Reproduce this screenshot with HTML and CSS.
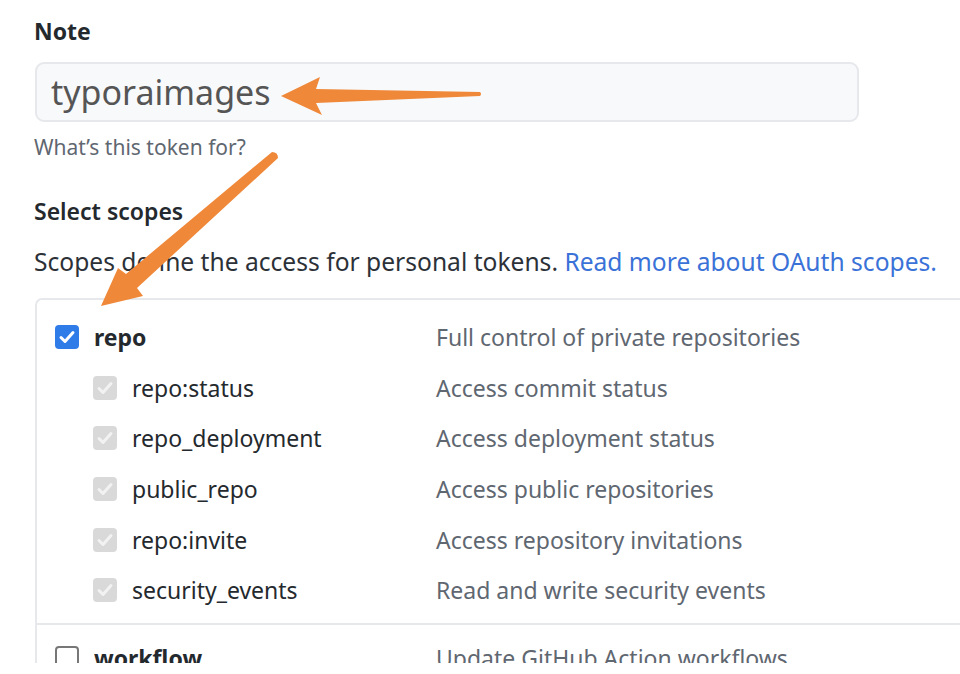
FILE: index.html
```html
<!DOCTYPE html>
<html lang="en">
<head>
<meta charset="utf-8">
<title>Note</title>
<link rel="stylesheet" href="styles.css">
</head>
<body>
<div class="page">
  <div class="field">
    <div class="label">Note</div>
    <div class="input">typoraimages</div>
    <div class="hint">What’s this token for?</div>
  </div>
  <div class="scopes">
    <div class="heading">Select scopes</div>
    <p class="desc">Scopes define the access for personal tokens. <a class="link">Read more about OAuth scopes.</a></p>
    <div class="table">
      <div class="group">
        <div class="row main">
          <span class="cell name"><span class="cb on"><svg viewBox="0 0 24 24"><path d="M6 12.5l4 4 8-9" /></svg></span><b>repo</b></span>
          <span class="cell text">Full control of private repositories</span>
        </div>
        <div class="row sub">
          <span class="cell name"><span class="cb dis"><svg viewBox="0 0 24 24"><path d="M6 12.5l4 4 8-9" /></svg></span>repo:status</span>
          <span class="cell text">Access commit status</span>
        </div>
        <div class="row sub">
          <span class="cell name"><span class="cb dis"><svg viewBox="0 0 24 24"><path d="M6 12.5l4 4 8-9" /></svg></span>repo_deployment</span>
          <span class="cell text">Access deployment status</span>
        </div>
        <div class="row sub">
          <span class="cell name"><span class="cb dis"><svg viewBox="0 0 24 24"><path d="M6 12.5l4 4 8-9" /></svg></span>public_repo</span>
          <span class="cell text">Access public repositories</span>
        </div>
        <div class="row sub">
          <span class="cell name"><span class="cb dis"><svg viewBox="0 0 24 24"><path d="M6 12.5l4 4 8-9" /></svg></span>repo:invite</span>
          <span class="cell text">Access repository invitations</span>
        </div>
        <div class="row sub">
          <span class="cell name"><span class="cb dis"><svg viewBox="0 0 24 24"><path d="M6 12.5l4 4 8-9" /></svg></span>security_events</span>
          <span class="cell text">Read and write security events</span>
        </div>
      </div>
      <div class="group">
        <div class="row main">
          <span class="cell name"><span class="cb off"></span><b>workflow</b></span>
          <span class="cell text">Update GitHub Action workflows</span>
        </div>
      </div>
    </div>
  </div>
  <svg class="arrows" width="960" height="674" viewBox="0 0 960 674">
    <path class="arrow" d="M281 96 L320 77 L316 89 L480 92 Q482 94 480 96 L316 103 L322 115 Z" />
    <path class="arrow" d="M101 306 L118 268 L126 274 L272 152 Q278 152 278 158 L137 288 L143 296 Z" />
  </svg>
</div>
</body>
</html>
```

FILE: styles.css
```css
* { box-sizing: border-box; }
html, body { margin: 0; padding: 0; background: #fff; }
body {
  font-family: "Noto Sans", "Open Sans", sans-serif;
  color: #24292e;
}
.page {
  position: relative;
  width: 960px;
  height: 663px;
  overflow: hidden;
  padding: 14px 0 0 34px;
}
.label {
  font-size: 23px;
  font-weight: 700;
  line-height: 34px;
}
.input {
  margin-top: 14px;
  width: 824px;
  height: 60px;
  margin-left: 1px;
  border: 2px solid #e6e8ec;
  border-radius: 9px;
  background: #f8f9fb;
  color: #555;
  font-size: 34px;
  line-height: 56px;
  padding-left: 14px;
}
.hint {
  margin-top: 10px;
  font-size: 21px;
  color: #5f6771;
  line-height: 30px;
}
.heading {
  margin-top: 32px;
  font-size: 23px;
  font-weight: 600;
  line-height: 34px;
}
.desc {
  margin: 17px 0 0;
  font-size: 24.6px;
  line-height: 34px;
  color: #2c3138;
}
.link { color: #3a72d8; }
.table {
  margin: 19px 0 0 1px;
  width: 960px;
  border-top: 2px solid #e6e8ec;
  border-left: 2px solid #e6e8ec;
  border-top-left-radius: 7px;
}
.group { padding: 12px 0 7px; }
.group + .group { border-top: 2px solid #e6e8ec; padding-top: 8px; }
.row {
  display: flex;
  align-items: center;
  height: 50.6px;
  font-size: 23px;
}
.cell.name {
  display: flex;
  align-items: center;
  width: 399px;
}
.row.main .cell.name { padding-left: 18px; }
.row.sub .cell.name { padding-left: 56px; }
.cb {
  width: 24px;
  height: 24px;
  border-radius: 4px;
  margin-right: 15px;
  flex: none;
  display: flex;
}
.cb svg { width: 24px; height: 24px; }
.cb path { fill: none; stroke-width: 3; stroke-linecap: round; stroke-linejoin: round; }
.cb.on { background: #2f7be8; }
.cb.on path { stroke: #fff; }
.cb.dis { background: #d9d9d9; }
.cb.dis path { stroke: #f2f2f2; }
.cb.off { background: #fff; border: 2px solid #777; }
.row b { font-weight: 700; color: #24292e; }
.row.sub .cell.name { color: #24292e; }
.cell.text { color: #5f6771; }
.arrows {
  position: absolute;
  left: 0;
  top: 0;
  pointer-events: none;
}
.arrow { fill: #ef8839; }
```
